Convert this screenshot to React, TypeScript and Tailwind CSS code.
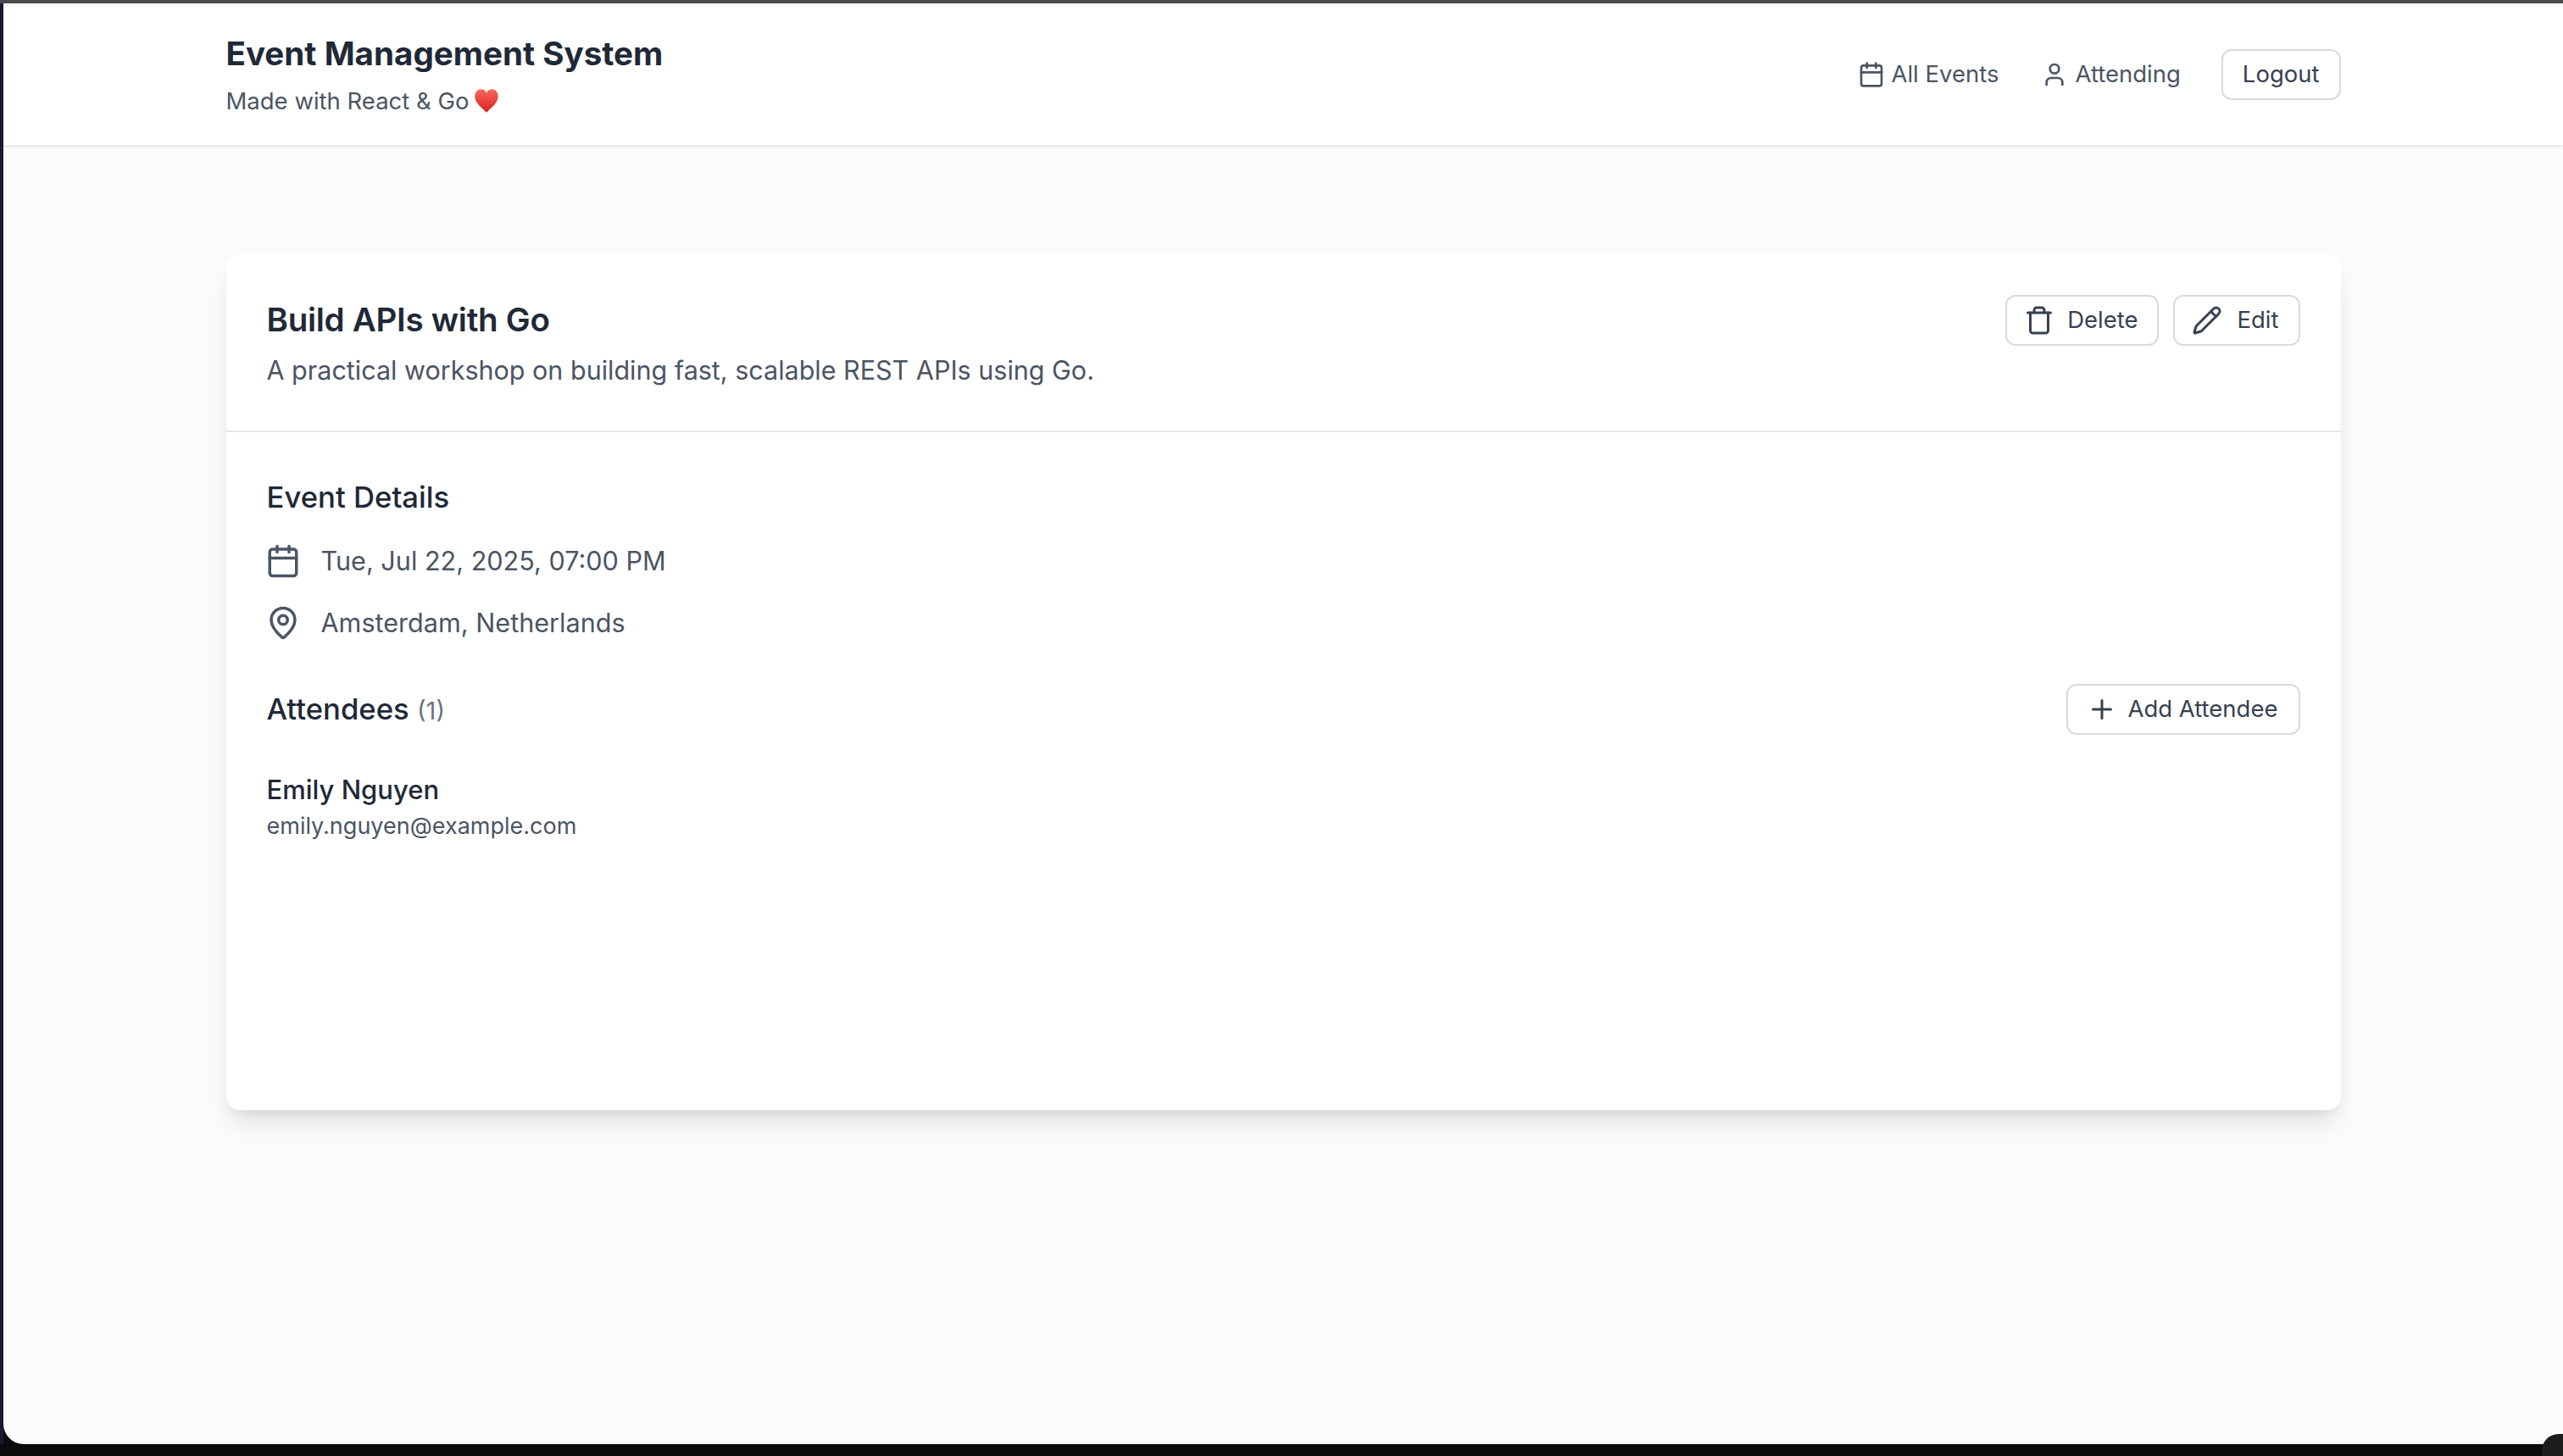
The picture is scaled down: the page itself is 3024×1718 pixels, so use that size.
import { Calendar, MapPin, Pencil, Plus, Trash, User } from 'lucide-react'

function OutlineButton({ children, className }: { children: React.ReactNode; className?: string }) {
  return (
    <button className={`flex h-[60px] items-center rounded-[12px] border-2 border-[#d8dadf] bg-white text-[27.5px] text-[#374151] ${className ?? ''}`}>
      {children}
    </button>
  )
}

function Heart() {
  return (
    <svg viewBox="0 0 24 24" className="ml-[6px] h-[30px] w-[30px]">
      <defs>
        <linearGradient id="heart" x1="0" y1="0" x2="0" y2="1">
          <stop offset="0" stopColor="#f76a5e" />
          <stop offset="1" stopColor="#dd1f1f" />
        </linearGradient>
      </defs>
      <path d="M12 23C8 18.5 1 14 1 7.5 1 3.8 3.8 1 6.8 1 9 1 11 2.2 12 4.5 13 2.2 15 1 17.2 1 20.2 1 23 3.8 23 7.5 23 14 16 18.5 12 23Z" fill="url(#heart)" />
    </svg>
  )
}

export default function App() {
  return (
    <div className="relative flex h-[1718px] w-full flex-col bg-[#0b0b0e] font-['Inter',sans-serif]">
      <div className="h-[4px] shrink-0 bg-[#4a4a4a]" />
      <div className="flex min-h-0 flex-1 pb-[14px]">
        <div className="w-[4px] shrink-0 bg-[#1a1a2e]" />
        <div className="flex-1 overflow-hidden rounded-bl-[24px] bg-[#fafbfc]">
          {/* header */}
          <header className="h-[167px] bg-white shadow-[0_2px_4px_rgba(0,0,0,0.1)]">
            <div className="mx-auto flex h-full w-[2495px] items-center justify-between">
              <div className="pb-[4px]">
                <h1 className="text-[38.6px] leading-[56px] font-bold text-[#1f2937]">Event Management System</h1>
                <p className="mt-[10px] flex items-center text-[27.5px] leading-[36px] text-[#4b5563]">
                  Made with React &amp; Go
                  <Heart />
                </p>
              </div>
              <nav className="flex items-center">
                <a className="flex items-center text-[27.5px] text-[#4b5563]">
                  <Calendar className="mr-[7px] h-[32px] w-[32px]" strokeWidth={2} />
                  All Events
                </a>
                <a className="ml-[50px] flex items-center text-[27.5px] text-[#4b5563]">
                  <User className="mr-[8px] h-[32px] w-[32px]" strokeWidth={2} />
                  Attending
                </a>
                <OutlineButton className="ml-[48px] px-[23px]">Logout</OutlineButton>
              </nav>
            </div>
          </header>

          {/* event card */}
          <main className="mx-auto mt-[129px] h-[1010px] w-[2495px] rounded-[16px] bg-white shadow-[0_20px_30px_-8px_rgba(0,0,0,0.12),0_8px_12px_-6px_rgba(0,0,0,0.08)]">
            <div className="flex h-[210px] items-start justify-between border-b-2 border-[#e5e7eb] px-[48px] pt-[48px]">
              <div className="pt-[6px]">
                <h2 className="text-[38.6px] leading-[46px] font-semibold tracking-[-0.3px] text-[#1f2937]">Build APIs with Go</h2>
                <p className="mt-[14px] text-[30.5px] leading-[46px] text-[#4b5563]">
                  A practical workshop on building fast, scalable REST APIs using Go.
                </p>
              </div>
              <div className="flex gap-[17px]">
                <OutlineButton className="pr-[23px] pl-[20px]">
                  <Trash className="mr-[15px] h-[36px] w-[36px]" strokeWidth={2} />
                  Delete
                </OutlineButton>
                <OutlineButton className="pr-[23px] pl-[20px]">
                  <Pencil className="mr-[17px] h-[36px] w-[36px]" strokeWidth={2} />
                  Edit
                </OutlineButton>
              </div>
            </div>

            <div className="px-[48px] pt-[53px]">
              <h3 className="text-[34.7px] leading-[46px] font-medium text-[#1f2937]">Event Details</h3>
              <div className="mt-[30px] flex items-center text-[30.6px] leading-[46px] text-[#4b5563]">
                <Calendar className="mr-[24px] -ml-[2px] h-[42px] w-[42px]" strokeWidth={2} />
                Tue, Jul 22, 2025, 07:00 PM
              </div>
              <div className="mt-[27px] flex items-center text-[30.6px] leading-[46px] text-[#4b5563]">
                <MapPin className="mr-[24px] -ml-[2px] h-[42px] w-[42px]" strokeWidth={2} />
                Amsterdam, Netherlands
              </div>

              <div className="mt-[49px] flex items-center justify-between">
                <h3 className="text-[34.7px] leading-[46px] font-medium text-[#1f2937]">
                  Attendees <span className="text-[29px] font-normal text-[#6b7280]">(1)</span>
                </h3>
                <OutlineButton className="pr-[24px] pl-[22px]">
                  <Plus className="mr-[12px] h-[36px] w-[36px]" strokeWidth={2} />
                  Add Attendee
                </OutlineButton>
              </div>

              <p className="mt-[42px] text-[31px] leading-[46px] font-medium text-[#1f2937]">Emily Nguyen</p>
              <p className="text-[27px] leading-[40px] text-[#4b5563]">emily.nguyen@example.com</p>
            </div>
          </main>
        </div>
      </div>
      {/* window corner at bottom right */}
      <div className="absolute right-0 bottom-0 h-[26px] w-[25px] rounded-tl-[20px] bg-[#1c1c1c]" />
    </div>
  )
}
